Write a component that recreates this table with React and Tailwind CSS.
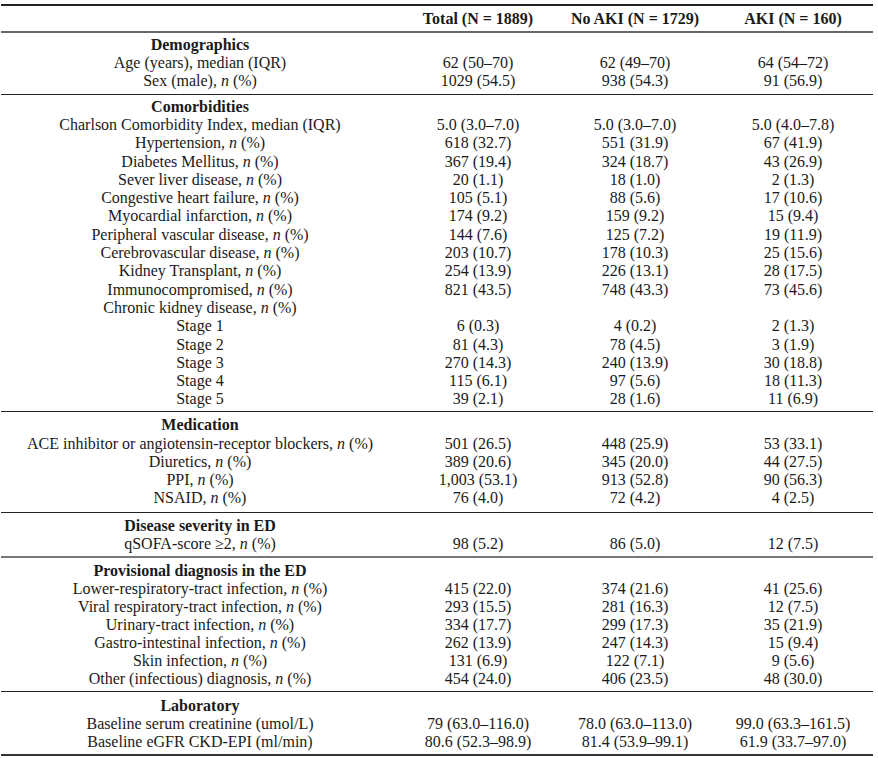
import React from 'react';

const N = () => <i>n</i>;

const sections = [
  {
    title: 'Demographics',
    pad: 'pt-[3px] pb-[3px]',
    rows: [
      ['Age (years), median (IQR)', '62 (50–70)', '62 (49–70)', '64 (54–72)'],
      [<>Sex (male), <N /> (%)</>, '1029 (54.5)', '938 (54.3)', '91 (56.9)'],
    ],
  },
  {
    title: 'Comorbidities',
    pad: 'pt-[3px] pb-[2.5px]',
    rows: [
      ['Charlson Comorbidity Index, median (IQR)', '5.0 (3.0–7.0)', '5.0 (3.0–7.0)', '5.0 (4.0–7.8)'],
      [<>Hypertension, <N /> (%)</>, '618 (32.7)', '551 (31.9)', '67 (41.9)'],
      [<>Diabetes Mellitus, <N /> (%)</>, '367 (19.4)', '324 (18.7)', '43 (26.9)'],
      [<>Sever liver disease, <N /> (%)</>, '20 (1.1)', '18 (1.0)', '2 (1.3)'],
      [<>Congestive heart failure, <N /> (%)</>, '105 (5.1)', '88 (5.6)', '17 (10.6)'],
      [<>Myocardial infarction, <N /> (%)</>, '174 (9.2)', '159 (9.2)', '15 (9.4)'],
      [<>Peripheral vascular disease, <N /> (%)</>, '144 (7.6)', '125 (7.2)', '19 (11.9)'],
      [<>Cerebrovascular disease, <N /> (%)</>, '203 (10.7)', '178 (10.3)', '25 (15.6)'],
      [<>Kidney Transplant, <N /> (%)</>, '254 (13.9)', '226 (13.1)', '28 (17.5)'],
      [<>Immunocompromised, <N /> (%)</>, '821 (43.5)', '748 (43.3)', '73 (45.6)'],
      [<>Chronic kidney disease, <N /> (%)</>, '', '', ''],
      ['Stage 1', '6 (0.3)', '4 (0.2)', '2 (1.3)'],
      ['Stage 2', '81 (4.3)', '78 (4.5)', '3 (1.9)'],
      ['Stage 3', '270 (14.3)', '240 (13.9)', '30 (18.8)'],
      ['Stage 4', '115 (6.1)', '97 (5.6)', '18 (11.3)'],
      ['Stage 5', '39 (2.1)', '28 (1.6)', '11 (6.9)'],
    ],
  },
  {
    title: 'Medication',
    pad: 'pt-[4px] pb-[4px]',
    rows: [
      [<>ACE inhibitor or angiotensin-receptor blockers, <N /> (%)</>, '501 (26.5)', '448 (25.9)', '53 (33.1)'],
      [<>Diuretics, <N /> (%)</>, '389 (20.6)', '345 (20.0)', '44 (27.5)'],
      [<>PPI, <N /> (%)</>, '1,003 (53.1)', '913 (52.8)', '90 (56.3)'],
      [<>NSAID, <N /> (%)</>, '76 (4.0)', '72 (4.2)', '4 (2.5)'],
    ],
  },
  {
    title: 'Disease severity in ED',
    pad: 'pt-[4px] pb-[2.5px]',
    rule: 'h-[2px] bg-[#777]',
    rows: [[<>qSOFA-score ≥2, <N /> (%)</>, '98 (5.2)', '86 (5.0)', '12 (7.5)']],
  },
  {
    title: 'Provisional diagnosis in the ED',
    pad: 'pt-[4px] pb-[2.5px]',
    row: 'h-[18px] leading-[18px]',
    rows: [
      [<>Lower-respiratory-tract infection, <N /> (%)</>, '415 (22.0)', '374 (21.6)', '41 (25.6)'],
      [<>Viral respiratory-tract infection, <N /> (%)</>, '293 (15.5)', '281 (16.3)', '12 (7.5)'],
      [<>Urinary-tract infection, <N /> (%)</>, '334 (17.7)', '299 (17.3)', '35 (21.9)'],
      [<>Gastro-intestinal infection, <N /> (%)</>, '262 (13.9)', '247 (14.3)', '15 (9.4)'],
      [<>Skin infection, <N /> (%)</>, '131 (6.9)', '122 (7.1)', '9 (5.6)'],
      [<>Other (infectious) diagnosis, <N /> (%)</>, '454 (24.0)', '406 (23.5)', '48 (30.0)'],
    ],
  },
  {
    title: 'Laboratory',
    pad: 'pt-[5px] pb-[2.5px]',
    rule: 'h-[2px] bg-[#333]',
    rows: [
      ['Baseline serum creatinine (umol/L)', '79 (63.0–116.0)', '78.0 (63.0–113.0)', '99.0 (63.3–161.5)'],
      ['Baseline eGFR CKD-EPI (ml/min)', '80.6 (52.3–98.9)', '81.4 (53.9–99.1)', '61.9 (33.7–97.0)'],
    ],
  },
];

const Row = ({ cells, bold, size }) => (
  <div
    className={`grid grid-cols-[398px_158px_156px_160px] text-center whitespace-nowrap ${
      size || 'h-[18.3px] leading-[18.3px]'
    }`}
  >
    {cells.map((c, i) => (
      <div key={i} className={bold ? 'font-bold' : ''}>
        {c}
      </div>
    ))}
  </div>
);

export default function App() {
  return (
    <div className="bg-white w-[878px] h-[758px] pt-[4px] text-[#1a1a1a] text-[16px] font-['Liberation_Serif',serif]">
      <div className="ml-[1px] w-[872px]">
        <div className="h-[2px] bg-[#222]" />
        <div className="pt-[3.5px] pb-[3px]">
          <Row bold cells={['', 'Total (N = 1889)', 'No AKI (N = 1729)', 'AKI (N = 160)']} />
        </div>
        <div className="h-[2px] bg-[#666]" />
        {sections.map((s) => (
          <div key={s.title}>
            <div className={s.pad}>
              <Row bold cells={[s.title, '', '', '']} />
              {s.rows.map((r, ri) => (
                <Row key={ri} cells={r} size={s.row} />
              ))}
            </div>
            <div className={s.rule || 'h-[1px] bg-[#222]'} />
          </div>
        ))}
      </div>
    </div>
  );
}
